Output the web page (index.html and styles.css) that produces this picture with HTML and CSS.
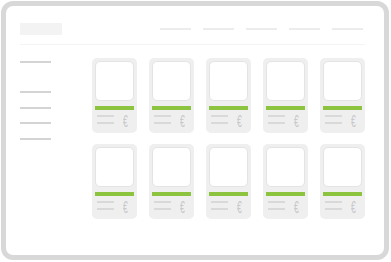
FILE: index.html
```html
<!DOCTYPE html>
<html>
  <head>
    <title>Shop wireframe</title>
    <link rel="stylesheet" href="styles.css">
  </head>
  <body>
    <div class="frame">
      <div class="header">
        <div class="logo"></div>
        <div class="nav">
          <span></span>
          <span></span>
          <span></span>
          <span></span>
          <span></span>
        </div>
      </div>
      <div class="divider"></div>
      <div class="main">
        <div class="sidebar">
          <span class="first"></span>
          <span></span>
          <span></span>
          <span></span>
          <span></span>
        </div>
        <div class="grid">
          <div class="card"><div class="pic"></div><div class="bar"></div><div class="meta"><div class="lines"><span></span><span></span></div><div class="price">€</div></div></div>
          <div class="card"><div class="pic"></div><div class="bar"></div><div class="meta"><div class="lines"><span></span><span></span></div><div class="price">€</div></div></div>
          <div class="card"><div class="pic"></div><div class="bar"></div><div class="meta"><div class="lines"><span></span><span></span></div><div class="price">€</div></div></div>
          <div class="card"><div class="pic"></div><div class="bar"></div><div class="meta"><div class="lines"><span></span><span></span></div><div class="price">€</div></div></div>
          <div class="card"><div class="pic"></div><div class="bar"></div><div class="meta"><div class="lines"><span></span><span></span></div><div class="price">€</div></div></div>
          <div class="card"><div class="pic"></div><div class="bar"></div><div class="meta"><div class="lines"><span></span><span></span></div><div class="price">€</div></div></div>
          <div class="card"><div class="pic"></div><div class="bar"></div><div class="meta"><div class="lines"><span></span><span></span></div><div class="price">€</div></div></div>
          <div class="card"><div class="pic"></div><div class="bar"></div><div class="meta"><div class="lines"><span></span><span></span></div><div class="price">€</div></div></div>
          <div class="card"><div class="pic"></div><div class="bar"></div><div class="meta"><div class="lines"><span></span><span></span></div><div class="price">€</div></div></div>
          <div class="card"><div class="pic"></div><div class="bar"></div><div class="meta"><div class="lines"><span></span><span></span></div><div class="price">€</div></div></div>
        </div>
      </div>
    </div>
  </body>
</html>
```

FILE: styles.css
```css
body {
  margin: 0;
  background: #fff;
  font-family: "Liberation Sans", Arial, sans-serif;
}
.frame {
  box-sizing: border-box;
  margin: 1px 0 0 1px;
  width: 388px;
  height: 259px;
  border: 5px solid #d8d8d8;
  border-radius: 12px;
  padding: 17px 0 0 14px;
}
.header {
  display: flex;
  justify-content: space-between;
  align-items: flex-start;
  width: 343px;
}
.logo {
  width: 42px;
  height: 12px;
  background: #f3f3f3;
}
.nav {
  display: flex;
  gap: 12px;
  margin-top: 5px;
}
.nav span {
  display: block;
  width: 31px;
  height: 2px;
  background: #ececec;
}
.divider {
  width: 345px;
  height: 1px;
  margin-top: 9px;
  background: #f4f4f4;
}
.main {
  display: flex;
  margin-top: 13px;
}
.sidebar {
  display: flex;
  flex-direction: column;
  width: 72px;
  padding-top: 3px;
}
.sidebar span {
  display: block;
  width: 31px;
  height: 2px;
  margin-bottom: 13.5px;
  background: #d4d4d4;
}
.sidebar span.first {
  margin-bottom: 28px;
}
.grid {
  display: grid;
  grid-template-columns: repeat(5, 45px);
  grid-auto-rows: 75px;
  column-gap: 12px;
  row-gap: 11px;
}
.card {
  box-sizing: border-box;
  background: #efefef;
  border-radius: 5px;
  padding: 3px 3px 0 3px;
}
.pic {
  box-sizing: border-box;
  height: 40px;
  background: #fff;
  border: 1px solid #e4e4e4;
  border-radius: 5px;
}
.bar {
  height: 4px;
  margin-top: 5px;
  background: #8cc43f;
}
.meta {
  display: flex;
  justify-content: space-between;
  align-items: flex-start;
  margin-top: 5px;
}
.lines span {
  display: block;
  width: 17px;
  height: 2px;
  margin: 0 0 5px 2px;
  background: #d9d9d9;
}
.price {
  font-size: 16px;
  line-height: 13px;
  color: #c8c8c8;
  margin: 0 4px 0 0;
  transform: scaleX(0.55);
}
```
